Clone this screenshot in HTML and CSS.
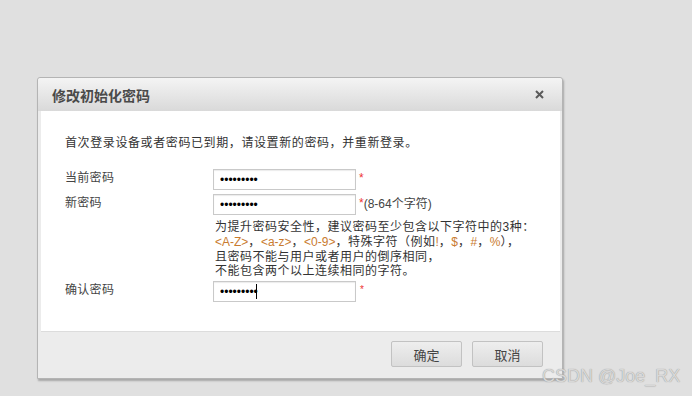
FILE: index.html
```html
<!DOCTYPE html>
<html lang="zh-CN">
<head>
  <meta charset="UTF-8" />
  <title>修改初始化密码</title>
  <link rel="stylesheet" href="styles.css">
</head>
<body>
  <div class="page">
    <div class="dialog">
      <div class="dialog-head">
        <span class="dialog-title">修改初始化密码</span>
        <svg class="dialog-close" width="9" height="9" viewBox="0 0 9 9">
          <path d="M1 1L8 8M8 1L1 8" stroke="#5a5a5a" stroke-width="2"/>
        </svg>
      </div>
      <div class="dialog-body">
        <p class="intro">首次登录设备或者密码已到期，请设置新的密码，并重新登录。</p>
        <div class="form">
          <div class="row">
            <label class="label">当前密码</label>
            <div class="field">
              <input class="pwd" type="password" value="123456789">
              <span class="req">*</span>
            </div>
          </div>
          <div class="row">
            <label class="label">新密码</label>
            <div class="field">
              <input class="pwd" type="password" value="123456789">
              <span class="req">*</span><span class="note">(8-64个字符)</span>
            </div>
          </div>
          <div class="hint">
            为提升密码安全性，建议密码至少包含以下字符中的<span class="num">3</span>种：<br>
            <span class="hl">&lt;A-Z&gt;</span>，<span class="hl">&lt;a-z&gt;</span>，<span class="hl">&lt;0-9&gt;</span>，特殊字符（例如<span class="hl">!</span>，<span class="hl">$</span>，<span class="hl">#</span>，<span class="hl">%</span>），<br>
            且密码不能与用户或者用户的倒序相同，<br>
            不能包含两个以上连续相同的字符。
          </div>
          <div class="row">
            <label class="label">确认密码</label>
            <div class="field">
              <div class="pwd-wrap">
                <input class="pwd" type="password" value="123456789">
                <span class="caret"></span>
              </div>
              <span class="req small">*</span>
            </div>
          </div>
        </div>
      </div>
      <div class="dialog-foot">
        <button class="btn">确定</button>
        <button class="btn">取消</button>
      </div>
    </div>
  </div>
  <div class="watermark">CSDN @Joe_RX</div>
</body>
</html>
```

FILE: styles.css
```css
* {
  box-sizing: border-box;
}

body {
  margin: 0;
  background: #e0e0e0;
  font-family: "Liberation Sans", "Noto Sans CJK SC", sans-serif;
  font-size: 12px;
  color: #333;
  height: 396px;
  overflow: hidden;
}

.page {
  padding: 77px 0 0 37px;
}

.dialog {
  width: 526px;
  height: 302px;
  border: 1px solid #b4b4b4;
  border-radius: 3px 3px 0 0;
  background: #ececec;
  box-shadow: 1px 2px 2px rgba(0, 0, 0, 0.25);
  display: flex;
  flex-direction: column;
}

.dialog-head {
  height: 33px;
  background: linear-gradient(#f4f4f4, #d9d9d9);
  display: flex;
  align-items: center;
  justify-content: space-between;
  padding: 0 18px 0 14px;
  border-radius: 3px 3px 0 0;
}

.dialog-title {
  font-family: "Noto Sans CJK SC", sans-serif;
  font-size: 14px;
  font-weight: 700;
  color: #4a4a4a;
}

.dialog-close {
  display: block;
}

.dialog-body {
  height: 221px;
  margin: 0 2px 0 3px;
  background: #fff;
  border-bottom: 1px solid #dcdcdc;
  padding: 22px 0 0 24px;
}

.intro {
  margin: 0 0 18px;
  font-family: "Noto Sans CJK SC", sans-serif;
  letter-spacing: 0.6px;
  line-height: 18px;
}

.row {
  display: flex;
  align-items: flex-start;
  margin-bottom: 4px;
}

.label {
  width: 148px;
  font-family: "Noto Sans CJK SC", sans-serif;
  letter-spacing: 0.3px;
  line-height: 16px;
  color: #444;
}

.field {
  display: flex;
  align-items: flex-start;
}

.pwd {
  display: block;
  width: 143px;
  height: 21px;
  border: 1px solid #c9c9c9;
  box-shadow: inset 0 1px 1px rgba(0, 0, 0, 0.08);
  padding: 0 6px;
  font-size: 12px;
  color: #000;
  background: #fff;
  outline: none;
  margin: 0;
}

.pwd-wrap {
  position: relative;
}

.caret {
  position: absolute;
  left: 43px;
  top: 3px;
  width: 1px;
  height: 15px;
  background: #000;
}

.req {
  color: #e33;
  margin-left: 3px;
  line-height: 18px;
}

.req.small {
  font-size: 10px;
  margin-left: 4px;
}

.note {
  line-height: 20px;
  color: #444;
}

.hint {
  margin: 0 0 4px 150px;
  font-family: "Noto Sans CJK SC", sans-serif;
  letter-spacing: 0.5px;
  line-height: 14px;
  color: #333;
}

.num {
  font-family: "Liberation Sans", sans-serif;
}

.hl {
  font-family: "Liberation Sans", sans-serif;
  letter-spacing: 0;
  color: #c97b2f;
}

.dialog-foot {
  flex: 1;
  display: flex;
  justify-content: flex-end;
  align-items: center;
  gap: 10px;
  padding: 0 19px 2px 0;
}

.btn {
  width: 71px;
  height: 26px;
  border: 1px solid #c2c2c2;
  border-radius: 2px;
  background: linear-gradient(#eeeeee, #dcdcdc);
  font-family: "Noto Sans CJK SC", sans-serif;
  font-size: 13px;
  color: #444;
  padding: 0;
}

.watermark {
  position: absolute;
  left: 542px;
  top: 366px;
  font-family: "Liberation Sans", sans-serif;
  font-size: 18px;
  color: #d8d8d8;
  text-shadow: 0 0 1px #888;
}
```
